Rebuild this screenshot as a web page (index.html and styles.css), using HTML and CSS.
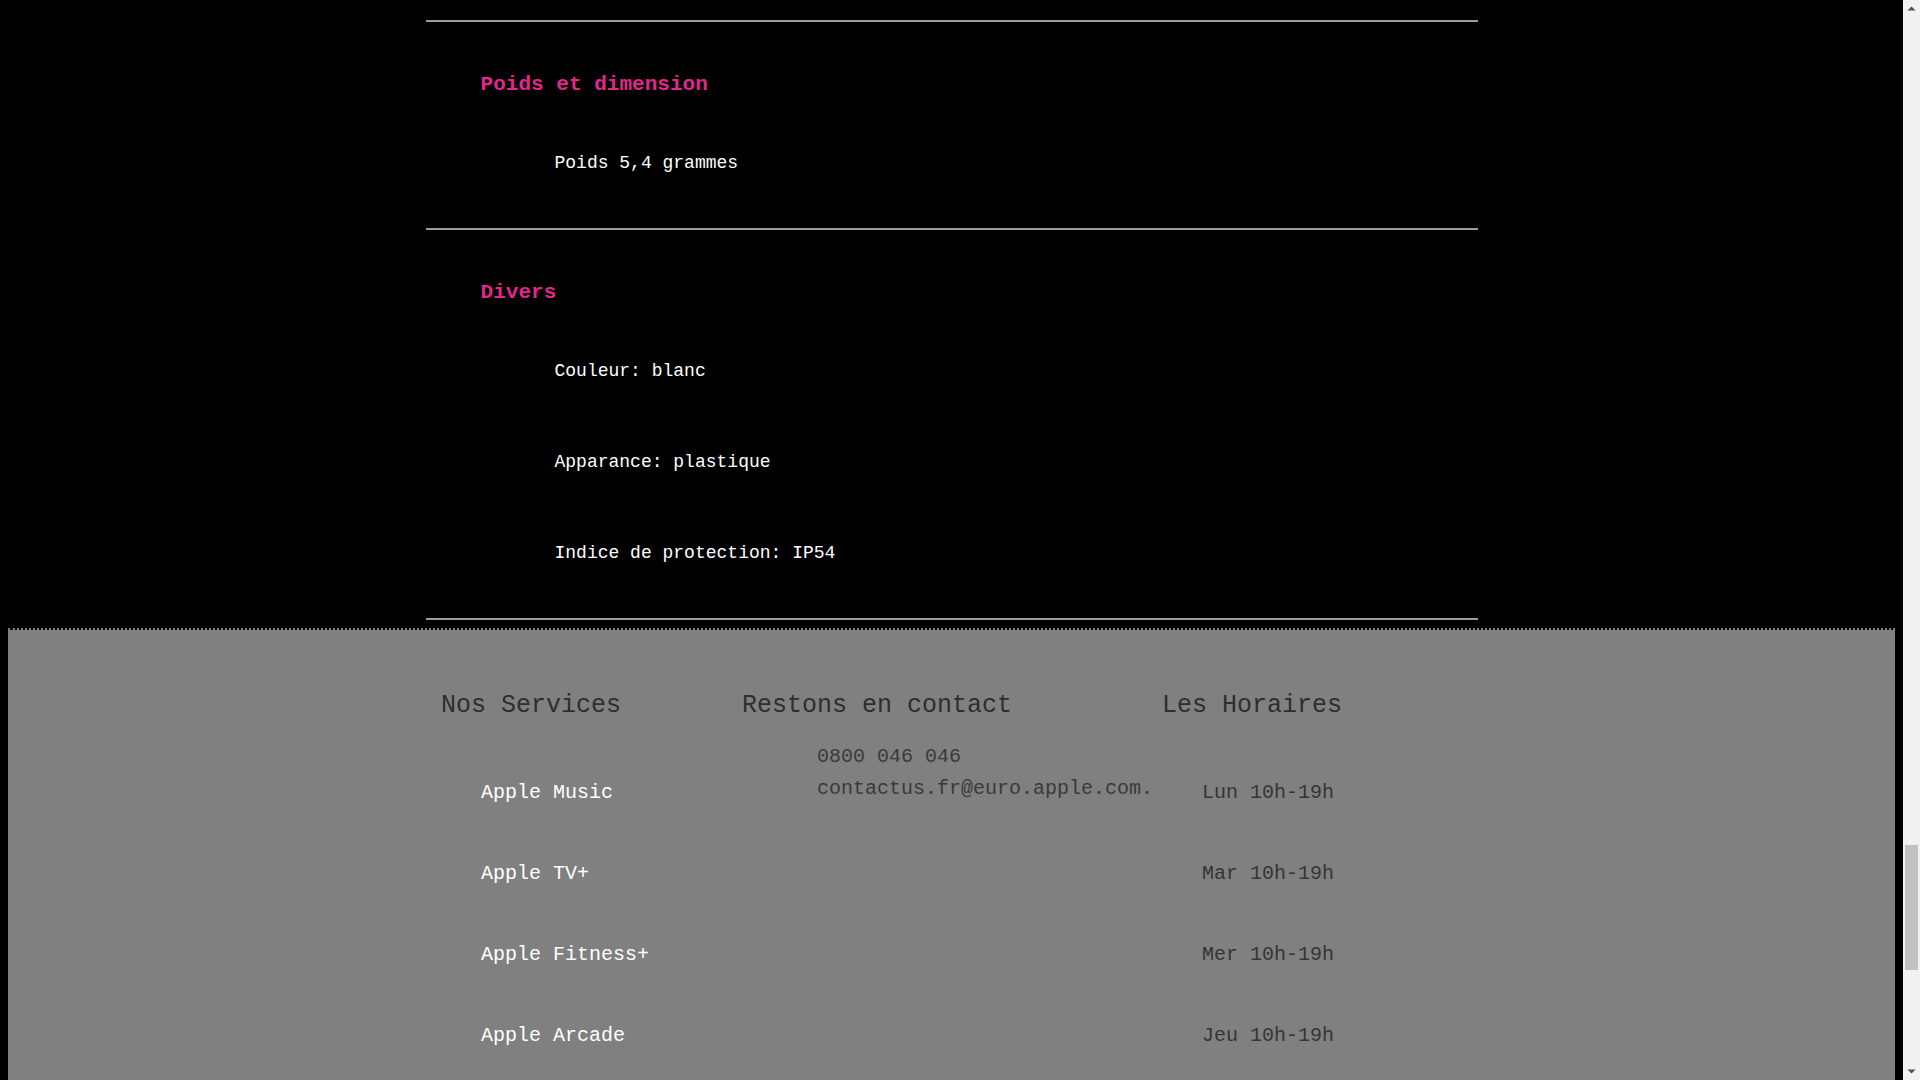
FILE: index.html
```html
<!DOCTYPE html>
<html lang="fr">
<head>
<meta charset="utf-8">
<title>Caractéristiques</title>
<link rel="stylesheet" href="styles.css">
</head>
<body>
<main class="specs">
  <hr class="rule">
  <section class="spec">
    <h3 class="spec-title">Poids et dimension</h3>
    <ul class="spec-list">
      <li>Poids 5,4 grammes</li>
    </ul>
  </section>
  <hr class="rule">
  <section class="spec">
    <h3 class="spec-title">Divers</h3>
    <ul class="spec-list">
      <li>Couleur: blanc</li>
      <li>Apparance: plastique</li>
      <li>Indice de protection: IP54</li>
    </ul>
  </section>
  <hr class="rule">
</main>
<footer class="site-footer">
  <div class="footer-cols">
    <div class="footer-col col-services">
      <h2 class="footer-title">Nos Services</h2>
      <ul class="footer-list services">
        <li>Apple Music</li>
        <li>Apple TV+</li>
        <li>Apple Fitness+</li>
        <li>Apple Arcade</li>
      </ul>
    </div>
    <div class="footer-col col-contact">
      <h2 class="footer-title">Restons en contact</h2>
      <ul class="footer-list contact">
        <li>0800 046 046</li>
        <li>contactus.fr@euro.apple.com.</li>
      </ul>
    </div>
    <div class="footer-col col-hours">
      <h2 class="footer-title">Les Horaires</h2>
      <ul class="footer-list hours">
        <li>Lun 10h-19h</li>
        <li>Mar 10h-19h</li>
        <li>Mer 10h-19h</li>
        <li>Jeu 10h-19h</li>
      </ul>
    </div>
  </div>
</footer>
<div class="scrollbar" aria-hidden="true">
  <div class="sb-btn">
    <svg width="9" height="5" viewBox="0 0 9 5"><path d="M0.5 4.5 L4.5 0.5 L8.5 4.5 Z" fill="#505050"/></svg>
  </div>
  <div class="sb-track"><div class="sb-thumb"></div></div>
  <div class="sb-btn">
    <svg width="9" height="5" viewBox="0 0 9 5"><path d="M0.5 0.5 L4.5 4.5 L8.5 0.5 Z" fill="#505050"/></svg>
  </div>
</div>
</body>
</html>
```
FILE: styles.css
```css
html {
  overflow: hidden;
  background: #000;
}

body {
  margin: 0 25px 0 8px;
  background: #000;
  color: #fff;
  font-family: "Liberation Mono", "Courier New", monospace;
}

.specs {
  width: 1052px;
  margin: 0 auto;
  padding-top: 20px;
}

.rule {
  height: 2px;
  margin: 0;
  border: none;
  background: #9a9a9a;
}

.spec {
  padding: 50px 0 55px;
}

.spec-title {
  margin: 0;
  padding-left: 55px;
  font-size: 21.06px;
  line-height: 24px;
  font-weight: bold;
  color: #e0288c;
}

.spec-list {
  list-style: none;
  margin: 57px 0 0;
  padding-left: 129px;
  display: flex;
  flex-direction: column;
  gap: 71px;
  font-size: 18px;
  line-height: 20px;
}

.site-footer {
  margin-top: 8px;
  border-top: 2px dotted #808080;
  background: #808080;
  background-clip: padding-box;
  padding: 61px 0 60px 433px;
}

.footer-cols {
  display: flex;
  align-items: flex-start;
}

.footer-col {
  flex: none;
}

.col-services { width: 301px; }
.col-contact { width: 420px; }

.footer-title {
  margin: 0;
  font-size: 25px;
  line-height: 30px;
  font-weight: normal;
  color: #2e2e2e;
}

.footer-list {
  list-style: none;
  margin: 62px 0 0;
  padding-left: 40px;
  display: flex;
  flex-direction: column;
  gap: 61px;
  font-size: 20px;
  line-height: 20px;
}

.services li { color: #fff; }
.hours li { color: #353535; }

.footer-list.contact {
  margin-top: 26px;
  padding-left: 75px;
  gap: 11.7px;
  color: #3a3a3a;
}

.scrollbar {
  position: fixed;
  top: 0;
  right: 0;
  width: 17px;
  height: 100vh;
  background: #f1f1f1;
  display: flex;
  flex-direction: column;
}

.sb-btn {
  height: 17px;
  flex: none;
  display: flex;
  align-items: center;
  justify-content: center;
}

.sb-track {
  flex: 1;
}

.sb-thumb {
  margin: 828px 2px 0;
  height: 125px;
  background: #c1c1c1;
}
```
